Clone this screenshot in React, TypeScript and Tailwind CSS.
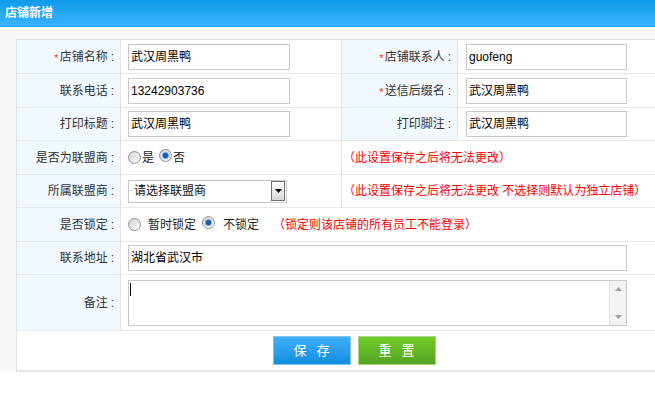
import React from "react";

const FONT = "font-['Liberation_Sans','Noto_Sans_CJK_SC',sans-serif]";

function Radio({ checked }: { checked?: boolean }) {
  return (
    <span className="relative inline-block h-[13px] w-[13px] shrink-0 rounded-full border border-[#8e8e8e] bg-gradient-to-br from-[#d2d2d2] to-[#ffffff]">
      {checked && (
        <span className="absolute left-[2px] top-[2px] h-[7px] w-[7px] rounded-full bg-[#6aa8ec]">
          <span className="absolute left-[1px] top-[1px] h-[5px] w-[5px] rounded-full bg-[#1d56a8]" />
        </span>
      )}
    </span>
  );
}

function Label({ text, required, className = "" }: { text: string; required?: boolean; className?: string }) {
  return (
    <div className={`flex shrink-0 items-center justify-end border-r border-[#e3e3e3] bg-[#f1f9ff] pr-[6px] text-[#333] ${className}`}>
      {required && <span className="relative top-[2px] mr-[1px] text-[11px] text-[#ff3300]">*</span>}
      <span>{text}</span>
      <span className="ml-[3px]">:</span>
    </div>
  );
}

function Field({ value, w }: { value: string; w: string }) {
  return (
    <div className={`flex h-[26px] items-center border border-[#c9c9c9] bg-white pl-[2px] text-[12px] text-black ${w}`}>
      {value}
    </div>
  );
}

const row = "flex border-b border-[#e8e8e8]";

export default function App() {
  return (
    <div className={`min-h-[413px] bg-white text-[12px] ${FONT}`}>
      <div className="flex h-[27px] items-center border-b border-[#2aa4ef] bg-gradient-to-b from-[#0a9ceb] to-[#38b2fd] pl-[5px] text-[12px] font-bold text-white">
        店铺新增
      </div>
      <div className="h-px bg-white" />
      <div className="bg-[#f7f7f7] pl-[16px] pt-[11px]">
        <div className="border-l border-t border-[#e3e3e3] bg-white">
          <div className={`${row} h-[34px]`}>
            <Label text="店铺名称" required className="w-[104px]" />
            <div className="flex w-[221px] shrink-0 items-center border-r border-[#e3e3e3] pl-[7px]">
              <Field value="武汉周黑鸭" w="w-[162px]" />
            </div>
            <Label text="店铺联系人" required className="w-[116px]" />
            <div className="flex flex-1 items-center pl-[8px]">
              <Field value="guofeng" w="w-[161px]" />
            </div>
          </div>

          <div className={`${row} h-[34px]`}>
            <Label text="联系电话" className="w-[104px]" />
            <div className="flex w-[221px] shrink-0 items-center border-r border-[#e3e3e3] pl-[7px]">
              <Field value="13242903736" w="w-[162px]" />
            </div>
            <Label text="送信后缀名" required className="w-[116px]" />
            <div className="flex flex-1 items-center pl-[8px]">
              <Field value="武汉周黑鸭" w="w-[161px]" />
            </div>
          </div>

          <div className={`${row} h-[33px]`}>
            <Label text="打印标题" className="w-[104px]" />
            <div className="flex w-[221px] shrink-0 items-center border-r border-[#e3e3e3] pl-[7px]">
              <Field value="武汉周黑鸭" w="w-[162px]" />
            </div>
            <Label text="打印脚注" className="w-[116px]" />
            <div className="flex flex-1 items-center pl-[8px]">
              <Field value="武汉周黑鸭" w="w-[161px]" />
            </div>
          </div>

          <div className={`${row} h-[34px]`}>
            <Label text="是否为联盟商" className="w-[104px]" />
            <div className="flex w-[221px] shrink-0 items-center border-r border-[#e3e3e3] pl-[7px] text-[#222]">
              <Radio />
              <span className="ml-[1px]">是</span>
              <span className="ml-[5px]"><Radio checked /></span>
              <span className="ml-[1px]">否</span>
            </div>
            <div className="flex flex-1 items-center pl-[1px] text-[#ff0000]">（此设置保存之后将无法更改）</div>
          </div>

          <div className={`${row} h-[33px]`}>
            <Label text="所属联盟商" className="w-[104px]" />
            <div className="flex w-[221px] shrink-0 items-center border-r border-[#e3e3e3] pl-[7px]">
              <div className="flex h-[23px] w-[159px] items-center border border-[#c9c9c9] bg-white">
                <span className="flex-1 pl-[5px] text-[#111]">请选择联盟商</span>
                <span className="mr-[1px] flex h-[20px] w-[14px] items-center justify-center border border-[#6f6f6f] bg-gradient-to-b from-[#ffffff] to-[#d6d6d6]">
                  <svg width="7" height="4" viewBox="0 0 7 4">
                    <path d="M0 0h7L3.5 4z" fill="#000" />
                  </svg>
                </span>
              </div>
            </div>
            <div className="flex flex-1 items-center pl-[1px] text-[#ff0000]">
              （此设置保存之后将无法更改 不选择则默认为独立店铺）
            </div>
          </div>

          <div className={`${row} h-[34px]`}>
            <Label text="是否锁定" className="w-[104px]" />
            <div className="flex flex-1 items-center pl-[7px] text-[#222]">
              <Radio />
              <span className="ml-[7px]">暂时锁定</span>
              <span className="ml-[6px]"><Radio checked /></span>
              <span className="ml-[8px]">不锁定</span>
              <span className="ml-[14px] text-[#ff0000]">（锁定则该店铺的所有员工不能登录）</span>
            </div>
          </div>

          <div className={`${row} h-[33px]`}>
            <Label text="联系地址" className="w-[104px]" />
            <div className="flex flex-1 items-center pl-[7px]">
              <Field value="湖北省武汉市" w="w-[499px]" />
            </div>
          </div>

          <div className={`${row} h-[56px]`}>
            <Label text="备注" className="w-[104px]" />
            <div className="flex flex-1 items-center pl-[7px]">
              <div className="flex h-[46px] w-[499px] border border-[#c9c9c9] bg-white">
                <div className="flex-1 pl-[1px] pt-[2px]">
                  <div className="h-[13px] w-px bg-black" />
                </div>
                <div className="flex w-[17px] flex-col items-center justify-between border-l border-[#e6e6e6] bg-[#f4f4f4] py-[6px]">
                  <svg width="7" height="4" viewBox="0 0 7 4">
                    <path d="M3.5 0L7 4H0z" fill="#a0a0a0" />
                  </svg>
                  <svg width="7" height="4" viewBox="0 0 7 4">
                    <path d="M0 0h7L3.5 4z" fill="#a0a0a0" />
                  </svg>
                </div>
              </div>
            </div>
          </div>

          <div className="flex h-[41px] items-center justify-center gap-[7px] border-b-2 border-[#e8e8e8] pl-[36px]">
            <button className="flex h-[29px] w-[78px] items-center justify-center gap-[10px] border border-[#86c4ec] bg-gradient-to-b from-[#3fb0fa] to-[#0b8de0] text-[13px] text-white">
              <span>保</span>
              <span>存</span>
            </button>
            <button className="flex h-[29px] w-[78px] items-center justify-center gap-[10px] border border-[#a6d783] bg-gradient-to-b from-[#72cc2c] to-[#55a423] text-[13px] text-white">
              <span>重</span>
              <span>置</span>
            </button>
          </div>
        </div>
      </div>
    </div>
  );
}
